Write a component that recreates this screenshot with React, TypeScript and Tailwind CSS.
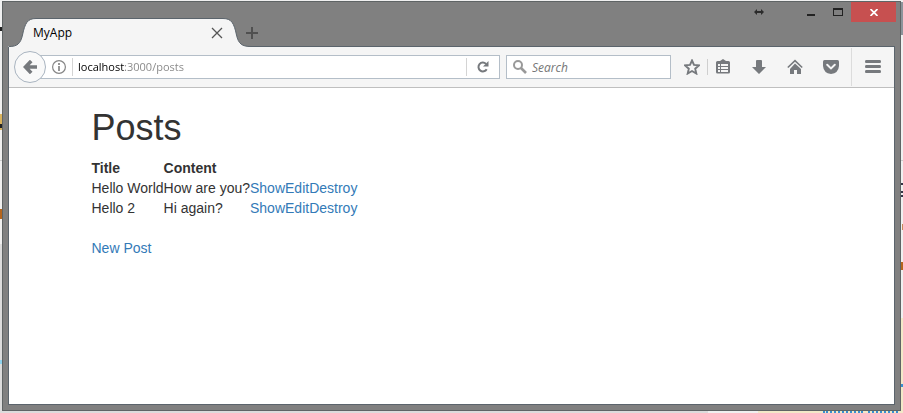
import React from "react";

const posts = [
  { title: "Hello World", content: "How are you?" },
  { title: "Hello 2", content: "Hi again?" },
];

function Desktop() {
  return (
    <div aria-hidden="true" className="absolute inset-0 -z-10 overflow-hidden bg-[#f0f0f0]">
      <span className="absolute left-0 top-[27px] h-1 w-[2px] bg-[#222]" />
      <span className="absolute left-0 top-[114px] h-4 w-[2px] bg-[#d9b25c]" />
      <span className="absolute left-0 top-[124px] h-1 w-[2px] bg-[#222]" />
      <span className="absolute left-0 top-[160px] h-px w-[2px] bg-[#ccc]" />
      <span className="absolute left-0 top-[209px] h-[10px] w-[2px] bg-[#b5651d]" />
      <span className="absolute bottom-0 left-0 top-[244px] w-[2px] bg-[#dcdcdc]" />
      <span className="absolute left-0 top-[360px] h-1 w-[2px] bg-[#8fd3ee]" />
      <span className="absolute right-0 top-[2px] h-[33px] w-[2px] bg-[#8d949b]" />
      <span className="absolute right-0 top-[160px] h-px w-[2px] bg-[#ccc]" />
      <span className="absolute right-0 top-[183px] h-[2px] w-[2px] bg-[#334]" />
      <span className="absolute right-0 top-[191px] h-[2px] w-[2px] bg-[#334]" />
      <span className="absolute right-0 top-[195px] h-[2px] w-[2px] bg-[#334]" />
      <span className="absolute right-0 top-[224px] h-[6px] w-px bg-[#c98a5a]" />
      <span className="absolute right-0 top-[262px] h-[8px] w-[2px] bg-[#b5651d]" />
      <span className="absolute bottom-0 right-0 top-[318px] w-[2px] bg-[#f3e9c8]" />
      <span className="absolute bottom-0 right-0 h-[2px] w-[145px] bg-[#f3e9c8]" />
      <span className="absolute bottom-0 left-0 right-[195px] h-[2px] bg-[#dcdcdc]" />
      <span className="absolute bottom-0 right-[5px] h-[2px] w-[30px] border-t-2 border-dotted border-[#3a8fd0]" />
      <span className="absolute bottom-0 right-[40px] h-[2px] w-[40px] border-t-2 border-dotted border-[#3a8fd0]" />
      <span className="absolute right-0 top-[384px] h-[3px] w-[2px] bg-[#3a8fd0]" />
    </div>
  );
}

function Tab() {
  return (
    <div className="relative z-10 -mb-px flex h-[29px] w-[243px] items-center pl-[25px] pr-[26px]">
      <svg className="absolute inset-0 -z-10" width="243" height="29" viewBox="0 0 243 29" aria-hidden="true">
        <path
          d="M0 29V28.5C9 28.5 12.5 26 14.5 17C17 5 19.5 .5 28 .5H215C223.5 .5 226 5 228.5 17C230.5 26 234 28.5 243 28.5V29Z"
          fill="#f5f5f5"
        />
        <path
          d="M1 28.5C9 28.5 12.5 26 14.5 17C17 5 19.5 .5 28 .5H215C223.5 .5 226 5 228.5 17C230.5 26 234 28.5 243 28.5"
          fill="none"
          stroke="#5b646c"
        />
      </svg>
      <span className="grow pt-px text-black">MyApp</span>
      <button aria-label="Close tab" className="flex size-4 items-center justify-center">
        <svg width="12" height="12" viewBox="0 0 12 12" stroke="#555" strokeWidth="1.3">
          <path d="M1 1L11 11M11 1L1 11" />
        </svg>
      </button>
    </div>
  );
}

function TitleBar() {
  return (
    <header className="flex h-11 items-end pl-[5px] pr-1">
      <Tab />
      <button aria-label="New tab" className="-ml-[7px] mb-[5px] flex size-4 items-center justify-center">
        <svg width="12" height="12" viewBox="0 0 12 12" stroke="#505050" strokeWidth="2">
          <path d="M6 0V12M0 6H12" />
        </svg>
      </button>
      <div className="ml-auto flex h-5 self-start">
        <button aria-label="Resize" className="mr-6 flex w-7 items-center justify-center">
          <svg width="10" height="6" viewBox="0 0 10 6">
            <path d="M0 3L3 0V2H7V0L10 3L7 6V4H3V6Z" fill="#2b2b2b" />
          </svg>
        </button>
        <button aria-label="Minimize" className="flex w-7 items-center justify-center">
          <svg width="8" height="8" viewBox="0 0 8 8">
            <path d="M0 6H8V8H0Z" fill="#222" />
          </svg>
        </button>
        <button aria-label="Maximize" className="flex w-[26px] items-center justify-center">
          <svg width="10" height="8" viewBox="0 0 10 8">
            <path d="M0 0H10V8H0ZM1 2V7H9V2Z" fill="#222" fillRule="evenodd" />
          </svg>
        </button>
        <button aria-label="Close" className="flex w-[45px] items-center justify-center bg-[#c75050]">
          <svg width="8" height="7" viewBox="0 0 8 7" stroke="#fff" strokeWidth="1.7">
            <path d="M.5 0L7.5 7M7.5 0L.5 7" />
          </svg>
        </button>
      </div>
    </header>
  );
}

function ToolButton({ label, children }: { label: string; children: React.ReactNode }) {
  return (
    <button aria-label={label} className="flex h-8 w-9 shrink-0 items-center justify-center">
      <svg width="16" height="16" viewBox="0 0 16 16" fill="#76797d">
        {children}
      </svg>
    </button>
  );
}

function Toolbar() {
  return (
    <nav className="flex h-[41px] items-center border-b border-[#bfbfbf] bg-[#f5f5f5] pl-[5px]">
      <button
        aria-label="Back"
        className="z-10 flex size-8 shrink-0 items-center justify-center rounded-full border border-[#a9b4c0] bg-[#f9f9f9]"
      >
        <svg width="14" height="14" viewBox="0 0 14 14" fill="none" stroke="#76797d" strokeWidth="3.6">
          <path d="M8.2 1L2.5 7L8.2 13M3 7H14" />
        </svg>
      </button>
      <div className="-ml-2 flex h-6 grow items-center border border-[#b4bec8] bg-white pl-3">
        <button aria-label="Site information" className="flex size-4 items-center justify-center">
          <svg width="14" height="14" viewBox="0 0 14 14" fill="none" stroke="#858585">
            <circle cx="7" cy="7" r="6.4" strokeWidth="1.2" />
            <path d="M7 6V11M7 3V5" strokeWidth="1.7" />
          </svg>
        </button>
        <span className="ml-[5px] h-[18px] w-px bg-[#d4d4d4]" />
        <input
          aria-label="Address"
          defaultValue="localhost:3000/posts"
          className="ml-[5px] w-0 grow bg-linear-to-r from-black from-[46px] to-[#858585] to-[46px] bg-clip-text pt-px text-[11px] text-transparent outline-none"
        />
        <span className="h-[18px] w-px bg-[#d4d4d4]" />
        <button aria-label="Reload" className="flex h-full w-8 items-center justify-center">
          <svg width="12" height="12" viewBox="0 0 12 12">
            <path d="M9.7 8.2A4.4 4.4 0 1 1 9 2.9" fill="none" stroke="#76797d" strokeWidth="2" />
            <path d="M11.500 0V5.500H6Z" fill="#76797d" />
          </svg>
        </button>
      </div>
      <div className="ml-[6px] flex h-6 w-[165px] shrink-0 items-center border border-[#b4bec8] bg-white pl-[6px]">
        <svg width="14" height="14" viewBox="0 0 14 14" fill="none" stroke="#999" aria-hidden="true">
          <circle cx="5" cy="5" r="4" strokeWidth="2" />
          <path d="M8 8L13 13" strokeWidth="2.6" />
        </svg>
        <input
          aria-label="Search"
          placeholder="Search"
          className="ml-[5px] w-0 grow pt-px italic outline-none placeholder:text-[#767676]"
        />
      </div>
      <div className="ml-[3px] flex shrink-0 items-center">
        <ToolButton label="Bookmark this page">
          <path
            d="M8 1.500L10 5.900L14.900 6.400L11.200 9.700L12.300 14.500L8 12L3.700 14.500L4.800 9.700L1.100 6.400L6 5.900Z"
            fill="none"
            stroke="#76797d"
            strokeWidth="1.9"
          />
        </ToolButton>
        <span className="-ml-[3px] h-4 w-px bg-[#cfcfcf]" />
        <div className="-ml-[3px] flex">
          <ToolButton label="Bookmarks list">
            <path
              fillRule="evenodd"
              d="M5 2L8 0L11 2H13.500Q15 2 15 3.500V13Q15 14.500 13.500 14.500H2.500Q1 14.500 1 13V3.500Q1 2 2.500 2ZM3 5V7H5V5ZM6 5V7H13V5ZM3 8V10H5V8ZM6 8V10H13V8ZM3 11V13H5V11ZM6 11V13H13V11Z"
            />
          </ToolButton>
          <ToolButton label="Downloads">
            <path d="M5 2Q5 1 6 1H10Q11 1 11 2V8H15L8 15L1 8H5Z" />
          </ToolButton>
          <ToolButton label="Home">
            <path d="M8 4.500L14 10V15H10V11H7V15H3V10Z" />
            <path d="M.8 8.500L8 1.700L15.200 8.500" fill="none" stroke="#76797d" strokeWidth="1.6" />
          </ToolButton>
          <ToolButton label="Pocket">
            <path d="M1.500 1H14.500Q16 1 16 2.500V7Q15.500 14 8 15Q.5 14 0 7V2.500Q0 1 1.500 1Z" />
            <path d="M4.200 5.800L8 9.400L11.800 5.800" fill="none" stroke="#f5f5f5" strokeWidth="2" strokeLinecap="round" />
          </ToolButton>
        </div>
        <span className="ml-[2px] h-[38px] w-px bg-[#dcdcdc]" />
        <div className="mx-[3px]">
          <ToolButton label="Open menu">
            <path d="M1 1H15Q16 1 16 2.500Q16 4 15 4H1Q0 4 0 2.500Q0 1 1 1ZM1 6H15Q16 6 16 7.500Q16 9 15 9H1Q0 9 0 7.500Q0 6 1 6ZM1 11H15Q16 11 16 12.500Q16 14 15 14H1Q0 14 0 12.500Q0 11 1 11Z" />
          </ToolButton>
        </div>
      </div>
    </nav>
  );
}

function PostsPage() {
  return (
    <main className="grow bg-white font-['Liberation_Sans',Arial,sans-serif] text-sm text-[#333]">
      <div className="mx-auto max-w-[750px] px-[15px]">
        <h1 className="mb-[10px] mt-5 text-4xl leading-10">Posts</h1>
        <table>
          <thead>
            <tr className="text-left">
              <th>Title</th>
              <th>Content</th>
              <th colSpan={3} />
            </tr>
          </thead>
          <tbody>
            {posts.map((post) => (
              <tr key={post.title}>
                <td>{post.title}</td>
                <td>{post.content}</td>
                {["Show", "Edit", "Destroy"].map((action) => (
                  <td key={action}>
                    <a href="#" className="text-[#337ab7]">
                      {action}
                    </a>
                  </td>
                ))}
              </tr>
            ))}
          </tbody>
        </table>
        <a href="#" className="mt-5 inline-block text-[#337ab7]">
          New Post
        </a>
      </div>
    </main>
  );
}

export default function App() {
  return (
    <div className="relative isolate flex min-h-screen flex-col px-[2px] pb-[2px] pt-px font-['Open_Sans','Noto_Sans',sans-serif] text-xs">
      <Desktop />
      <div className="flex grow flex-col border border-[#5f6465] bg-[#808080]">
        <TitleBar />
        <div className="mx-[5px] mb-[5px] flex grow flex-col border border-[#5b646c]">
          <Toolbar />
          <PostsPage />
        </div>
      </div>
    </div>
  );
}
